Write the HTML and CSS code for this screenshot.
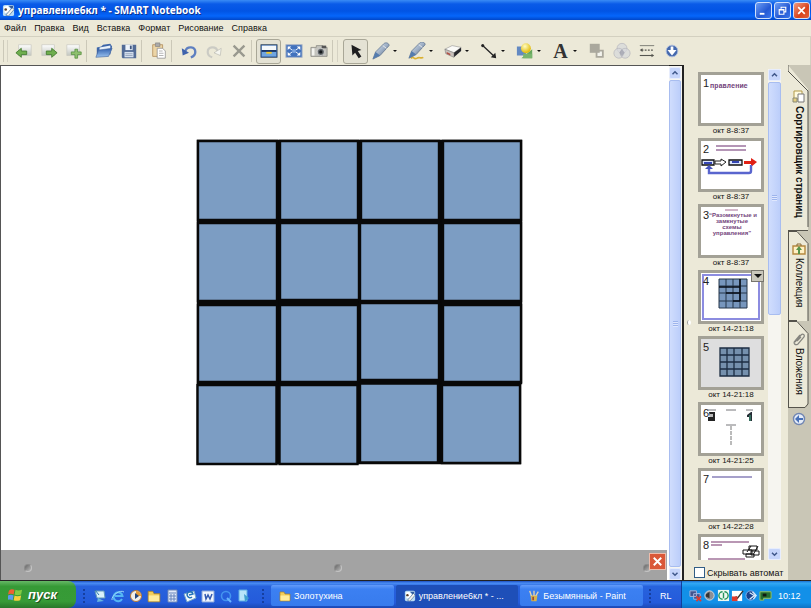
FILE: index.html
```html
<!DOCTYPE html>
<html lang="ru">
<head>
<meta charset="utf-8">
<title>управление6кл * - SMART Notebook</title>
<link rel="stylesheet" href="styles.css">
</head>
<body>
<svg class="defs" aria-hidden="true">
  <defs>
    <linearGradient id="blue" x1="0" y1="0" x2="0" y2="1"><stop offset="0" stop-color="#2f5fae"/><stop offset="1" stop-color="#9cc4f0"/></linearGradient>
    <linearGradient id="pen" x1="0" y1="0" x2="1" y2="1"><stop offset="0" stop-color="#e4edf5"/><stop offset=".5" stop-color="#9fb0c6"/><stop offset="1" stop-color="#3c4c66"/></linearGradient>
    <linearGradient id="sheet" x1="0" y1="0" x2="0" y2="1"><stop offset="0" stop-color="#fff"/><stop offset="1" stop-color="#c2c6bf"/></linearGradient>
    <radialGradient id="ball" cx=".4" cy=".3" r=".7"><stop offset="0" stop-color="#fffcc0"/><stop offset="1" stop-color="#e0b800"/></radialGradient>
    <symbol id="app" viewBox="0 0 14 14"><rect x="1" y="1" width="12" height="12" rx="2" fill="#b9dcf5"/><path d="M2 3l4-1 3 3-2 4-4 1z" fill="#fff"/><path d="M7 2l5 0 0 5z" fill="#315a9c"/><path d="M4 12l7-8 2 2-6 7z" fill="#f4f4ee" stroke="#47678e" stroke-width=".7"/><circle cx="4" cy="6" r="1.4" fill="#59422c"/></symbol>
    <symbol id="folder" viewBox="0 0 12 12"><path d="M1 2h4l1 2h5v7H1z" fill="#f3ce59" stroke="#a8802a" stroke-width=".7"/><path d="M1.500 5.500h9v5h-9z" fill="#ffec9c"/></symbol>
    <symbol id="up" viewBox="0 0 12 12"><path d="M3 7.500l3-3 3 3" fill="none" stroke="#41598c" stroke-width="1.800"/></symbol>
    <symbol id="down" viewBox="0 0 12 12"><path d="M3 4.500l3 3 3-3" fill="none" stroke="#41598c" stroke-width="1.800"/></symbol>
  </defs>
</svg>

<header class="titlebar">
  <svg class="title-icon" viewBox="0 0 14 14"><use href="#app"/></svg>
  <h1>управление6кл * - SMART Notebook</h1>
  <button class="win" aria-label="Свернуть"><svg viewBox="0 0 16 16"><path d="M4 11.500h5" stroke="#fff" stroke-width="2"/></svg></button>
  <button class="win" aria-label="Восстановить"><svg viewBox="0 0 16 16"><path d="M6.500 6V4.500h5v5H10M6 4.500h6M4.500 7h5v5h-5zM4 7.500h6" fill="none" stroke="#fff" stroke-width="1.200"/></svg></button>
  <button class="win close" aria-label="Закрыть"><svg viewBox="0 0 16 16"><path d="M4.500 4.500l7 7M11.500 4.500l-7 7" stroke="#fff" stroke-width="1.800"/></svg></button>
</header>

<nav class="menubar">
  <button>Файл</button><button>Правка</button><button>Вид</button><button>Вставка</button><button>Формат</button><button>Рисование</button><button>Справка</button>
</nav>

<div class="toolbar">
  <i class="sep grip"></i>
  <button aria-label="Назад"><svg viewBox="0 0 20 20"><path d="M4 3h14v12H4z" fill="url(#sheet)" stroke="#c9c9c0" stroke-width=".8"/><path d="M1 12l6-5v3h6v4H7v3z" fill="#6fae4e" stroke="#3b7527" stroke-width=".9"/></svg></button>
  <button aria-label="Вперёд"><svg viewBox="0 0 20 20"><path d="M2 3h14v12H2z" fill="url(#sheet)" stroke="#c9c9c0" stroke-width=".8"/><path d="M19 12l-6-5v3H7v4h6v3z" fill="#6fae4e" stroke="#3b7527" stroke-width=".9"/></svg></button>
  <button aria-label="Добавить страницу"><svg viewBox="0 0 20 20"><path d="M2 3h14v12H2z" fill="url(#sheet)" stroke="#c9c9c0" stroke-width=".8"/><path d="M11 8h3v3h4v3h-4v4h-3v-4H7v-3h4z" fill="#8fc06e" stroke="#4d8a38" stroke-width=".8"/></svg></button>
  <i class="sep"></i>
  <button aria-label="Открыть"><svg viewBox="0 0 20 20"><path d="M2 6l5-1 2-2 8-1 2 3-2 9H2z" fill="#3c65a8"/><path d="M5 6l12-2v7H5z" fill="#e8f1fb"/><path d="M1 17l3-8 15-2-4 9z" fill="url(#blue)" stroke="#49699e" stroke-width=".7"/></svg></button>
  <button aria-label="Сохранить"><svg viewBox="0 0 20 20"><path d="M2 3h16v15H3l-1-1z" fill="#526b96"/><path d="M6 3h8v6H6z" fill="#edf3fa"/><path d="M11 4h2v4h-2z" fill="#3f567e"/><path d="M5 11h10v6H5z" fill="#d5e0ef"/><path d="M6 13h8M6 15h8" stroke="#8696b0" stroke-width=".8"/></svg></button>
  <i class="sep"></i>
  <button aria-label="Вставить"><svg viewBox="0 0 20 20"><path d="M3 3h11v13H3z" fill="#ecd5a6" stroke="#ad8450" stroke-width=".8"/><path d="M6 1h5v4H6z" fill="#aaa" stroke="#777" stroke-width=".6"/><path d="M8 7h6l3 3v8H8z" fill="#fff" stroke="#888" stroke-width=".8"/><path d="M10 10h4M10 12.500h5M10 15h5" stroke="#999" stroke-width=".8"/></svg></button>
  <i class="sep"></i>
  <button aria-label="Отменить"><svg viewBox="0 0 20 20"><path d="M6 10c2-6 11-5 11 1 0 3-2 5-5 6" fill="none" stroke="#5e7fc0" stroke-width="2.600"/><path d="M2 7l1 8 7-3z" fill="#3e62ac"/></svg></button>
  <button aria-label="Повторить"><svg viewBox="0 0 20 20"><path d="M14 10C12 4 3 5 3 11c0 3 2 5 5 6" fill="none" stroke="#cbcbc4" stroke-width="2.400"/><path d="M18 7l-1 8-7-3z" fill="#f5f5ef" stroke="#b5b5ad" stroke-width=".7"/></svg></button>
  <button aria-label="Удалить"><svg viewBox="0 0 20 20"><path d="M4 4l12 12M16 4L4 16" stroke="#99998f" stroke-width="2.600"/></svg></button>
  <i class="sep"></i>
  <button class="on" aria-label="Затенение экрана"><svg viewBox="0 0 20 20"><rect x="1" y="3" width="18" height="14" fill="#3467b0" stroke="#345" stroke-width=".8"/><path d="M2 4h16v5H2z" fill="#f4f8fb"/><path d="M2 9h16v2H2z" fill="#16305f"/><path d="M2 11h16v5H2z" fill="#70a5df"/><path d="M7 11h6v2H7z" fill="#f3c928"/></svg></button>
  <button aria-label="Полный экран"><svg viewBox="0 0 20 20"><rect x="1" y="3" width="18" height="14" fill="#4272bd" stroke="#aab4c5"/><path d="M3 5h4L3 9zM17 5h-4l4 4zM3 15h4l-4-4zM17 15h-4l4-4z" fill="#fff"/><path d="M4 6l4 3M16 6l-4 3M4 14l4-3M16 14l-4-3" stroke="#fff"/><path d="M8 8h4v4H8z" fill="#7fa6de"/></svg></button>
  <button aria-label="Захват экрана"><svg viewBox="0 0 20 20"><path d="M1 6h6V4h7v2h5v10H1z" fill="#c3c3bd" stroke="#85857e" stroke-width=".8"/><path d="M2 7h3v8H2z" fill="#f4f4ef"/><path d="M13 4h5v3h-5z" fill="#555"/><circle cx="12" cy="11" r="4" fill="#5d6265" stroke="#eee" stroke-width=".7"/><circle cx="12" cy="11" r="1.800" fill="#15191c"/></svg></button>
  <i class="sep wide"></i>
  <button class="on" aria-label="Выбрать"><svg viewBox="0 0 20 20"><path d="M5 3l1 12 3-3 4 6 3-2-4-6 4-1z" fill="#1e1e20"/></svg></button>
  <button aria-label="Перо"><svg viewBox="0 0 20 20"><path d="M1 19l3-8L13 2c2-2 6-1 6 2L9 15z" fill="url(#pen)" stroke="#5b6f8c" stroke-width=".8"/><path d="M1 19l3-8 5 4z" fill="#547cae"/><path d="M12 4l4 3" stroke="#eee"/></svg></button>
  <button class="drop" aria-label="Виды пера"></button>
  <button aria-label="Художественное перо"><svg viewBox="0 0 20 20"><path d="M3 18c5-3 2 2 7 0 3-2 4 1 7-1" stroke="#dbb132" stroke-width="1.800" fill="none"/><path d="M1 18l3-8L13 1c2-2 6-1 6 2L9 14z" fill="url(#pen)" stroke="#5b6f8c" stroke-width=".8"/><path d="M1 18l3-8 5 4z" fill="#547cae"/><path d="M12 3l4 3" stroke="#eee"/></svg></button>
  <button class="drop" aria-label="Виды художественного пера"></button>
  <button aria-label="Ластик"><svg viewBox="0 0 20 20"><path d="M1 8l8-4 10 2-8 6z" fill="#fafaf7" stroke="#888" stroke-width=".6"/><path d="M11 12l8-6v4l-8 7z" fill="#25262b"/><path d="M1 8l10 4v5L2 13z" fill="#c9c2bc" stroke="#777" stroke-width=".6"/><path d="M3 11l4 2v2l-4-2z" fill="#b24f43"/></svg></button>
  <button class="drop" aria-label="Виды ластика"></button>
  <button aria-label="Линия"><svg viewBox="0 0 20 20"><path d="M3 4l13 12" stroke="#222" stroke-width="1.500"/><circle cx="3" cy="4" r="1.700" fill="#222"/><path d="M18 18l-6-1 5-5z" fill="#222"/></svg></button>
  <button class="drop" aria-label="Виды линий"></button>
  <button aria-label="Фигура"><svg viewBox="0 0 20 20"><path d="M1 5h10v10H1z" fill="#6389c2"/><path d="M6 18L18 8v10z" fill="#66a75c"/><path d="M8 13h10v5H8z" fill="#78b56e"/><circle cx="11" cy="7" r="5.500" fill="url(#ball)"/></svg></button>
  <button class="drop" aria-label="Виды фигур"></button>
  <button class="letter" aria-label="Текст">A</button>
  <button class="drop" aria-label="Виды текста"></button>
  <button aria-label="Порядок"><svg viewBox="0 0 20 20"><path d="M9.500 9.500h7v7h-7z" fill="#f3f3ed" stroke="#aaa89d" stroke-width="2"/><path d="M2 2h11v10H2z" fill="#aaa89d"/></svg></button>
  <button aria-label="Прозрачность"><svg viewBox="0 0 20 20" fill="#d6d7dc" fill-opacity=".7" stroke="#b6b7bc" stroke-width=".8"><circle cx="10" cy="7" r="5.500"/><circle cx="6.500" cy="12.500" r="5.500"/><circle cx="13.500" cy="12.500" r="5.500"/><path d="M10 8l3 4-3 4-3-4z" fill="#9b9da9" stroke="none"/></svg></button>
  <button aria-label="Свойства линии"><svg viewBox="0 0 20 20" stroke="#55554f" stroke-width="1.200"><path d="M2 4h16" stroke="#88887f"/><path d="M4 9h14" stroke-dasharray="2 1.500"/><path d="M2 15h14"/><path d="M5 7L2 9l3 2zM15 13l3 2-3 2z" fill="#55554f" stroke="none"/></svg></button>
  <button aria-label="Переместить панель"><svg viewBox="0 0 20 20"><circle cx="10" cy="10" r="6.500" fill="#4569ad" stroke="#aebddd"/><path d="M8.500 5h3v4H15l-5 6-5-6h3.500z" fill="#fff"/></svg></button>
</div>

<main class="workspace">
  <section class="editor">
    <div class="page">
      <svg class="drawing" viewBox="196 139 327 327" fill="#7c9dc3" stroke="#080808" stroke-width="2.400">
        <path d="M198 141h323v242h-1v80H198z" fill="#080808"/>
        <path d="M198 141h79v79h-79zM280 141h78v79h-78zM361 141h78v79h-78zM443 141h78v79h-78z"/>
        <path d="M198 223h79v78h-79zM280 223h79v77h-79zM360 223h79v78h-79zM443 223h78v78h-78z"/>
        <path d="M198 305h79v77h-79zM280 305h78v77h-78zM360 303h79v77h-79zM443 305h78v77h-78z"/>
        <path d="M197.500 385h79v79h-79zM279.500 385h78v79h-78zM360 383.500h78v79h-78zM442 385h78v78h-78z"/>
      </svg>
    </div>
    <div class="shade"><i class="dot"></i><i class="dot"></i><i class="dot"></i>
      <button class="shade-close" aria-label="Закрыть затенение"><svg viewBox="0 0 16 16"><path d="M4 4l8 8M12 4l-8 8" stroke="#fff" stroke-width="2"/></svg></button></div>
  </section>
  <div class="scroll main-scroll">
    <button aria-label="Вверх"><svg viewBox="0 0 12 12"><use href="#up"/></svg></button>
    <div class="track"><div class="thumb"></div></div>
    <button aria-label="Вниз"><svg viewBox="0 0 12 12"><use href="#down"/></svg></button>
  </div>
  <div class="gutter"><i></i></div>
  <aside class="sorter">
    <div class="sorter-body">
      <ol class="slides">
        <li><svg viewBox="0 0 60 48"><text class="num" x="2" y="12">1</text><text class="slide-title spaced" x="9" y="13">правление</text></svg><span>окт 8-8:37</span></li>
        <li><svg viewBox="0 0 60 48"><text class="num" x="2" y="12">2</text><path d="M15 5h30M15 9h30" stroke="#9c739e" stroke-width="1.500"/><path d="M1 19h12v5H1zM28 19h13v5H28z" fill="#dbe5ff" stroke="#111" stroke-width="1.300"/><path d="M3 22h8M31 21h7" stroke="#3546b5" stroke-width="2"/><path d="M14 20h6v-2l5 3-5 4v-2h-6z" fill="#fff" stroke="#222"/><path d="M43 20h7v-3l6 4-6 5v-3h-7z" fill="#e02116"/><path d="M50 24v6q0 2-2 2H8v-5" fill="none" stroke="#5965ce" stroke-width="2.400"/><path d="M4 28l4-4 4 4z" fill="#4654c0"/></svg><span>окт 8-8:37</span></li>
        <li><svg viewBox="0 0 60 48"><text class="num" x="2" y="12">3</text><path d="M24 3h13" stroke="#a66e95"/><g class="slide-title" text-anchor="middle"><text x="32" y="10">“Разомкнутые и</text><text x="31" y="16">замкнутые</text><text x="31" y="22">схемы</text><text x="31" y="28">управления”</text></g></svg><span>окт 8-8:37</span></li>
        <li class="current"><svg viewBox="0 0 60 48"><text class="num" x="2" y="12">4</text><path d="M18 6h28v29H18z" fill="#7796bd"/><path d="M18 6h28v29H18zM25 6v29M32 6v29M39 6v29M18 13h28M18 20h28M18 28h28" fill="none" stroke="#26374b"/><path d="M18 14h21M25 20h14M32 28h7M39 6v22" fill="none" stroke="#080e18" stroke-width="1.600"/></svg><button class="slide-menu" aria-label="Меню страницы"></button><span>окт 14-21:18</span></li>
        <li class="dim"><svg viewBox="0 0 60 48"><text class="num" x="2" y="12">5</text><path d="M19 9h29v28H19z" fill="#7590ad"/><path d="M19 9h29v28H19zM26 9v28M33 9v28M41 9v28M19 16h29M19 23h29M19 30h29" fill="none" stroke="#1c2d43" stroke-width="1.300"/></svg><span>окт 14-21:18</span></li>
        <li><svg viewBox="0 0 60 48"><text class="num" x="2" y="12">6</text><path d="M6 5h9M25 5h10M45 5h7M25 20h10" stroke="#77777a"/><path d="M8 7h6v9H7v-4h2z" fill="#222"/><path d="M9 9h3v3H9z" fill="#bbb"/><path d="M30 21v20" stroke="#777" stroke-dasharray="4 1"/><path d="M46 10l4-3h1v9h-3v-4h-2z" fill="#252c35"/><path d="M49 10v6" stroke="#47af86"/></svg><span>окт 14-21:25</span></li>
        <li><svg viewBox="0 0 60 48"><text class="num" x="2" y="12">7</text><path d="M11 6h40" stroke="#8981b8" stroke-width="1.500"/></svg><span>окт 14-22:28</span></li>
        <li><svg viewBox="0 0 60 48"><text class="num" x="2" y="12">8</text><path d="M10 5h38M10 8h11M7 22h37" stroke="#a2759c" stroke-width="1.500"/><path d="M48 9h8v4h-8zM42 13h9v4h-9zM50 14h8v4h-8zM45 17h8v3h-8zM50 9l-4 6M57 9l-5 9" fill="#fff" stroke="#151515"/></svg></li>
      </ol>
      <div class="scroll side-scroll">
        <button aria-label="Страницы вверх"><svg viewBox="0 0 12 12"><use href="#up"/></svg></button>
        <div class="track"><div class="thumb"></div></div>
        <button aria-label="Страницы вниз"><svg viewBox="0 0 12 12"><use href="#down"/></svg></button>
      </div>
    </div>
    <label class="hide"><input type="checkbox"><span>Скрывать автомат</span></label>
  </aside>
  <nav class="tabs">
    <button class="tab active"><svg class="tab-shape" viewBox="0 0 24 166" preserveAspectRatio="none"><path d="M0 0l20 24v142H0z" fill="#ece9d8"/><path d="M0 0v6l20 20v136M0 165.500h20" fill="none" stroke="#55534c"/></svg><svg class="tab-icon" viewBox="0 0 14 14"><path d="M2 1h8v8H2z" fill="#fffbe0" stroke="#b39a48"/><path d="M6 4h6v8H6z" fill="#fff" stroke="#777"/><path d="M1 8h4v4H1z" fill="#e4cf80" stroke="#887"/></svg><span>Сортировщик страниц</span></button>
    <button class="tab"><svg class="tab-shape" viewBox="0 0 24 90" preserveAspectRatio="none"><path d="M0 0h9l11 12v78H0z" fill="#ece9d8"/><path d="M.5 0v90M0 .5h9l11 12V90M0 89.500h9" fill="none" stroke="#55534c"/></svg><svg class="tab-icon" viewBox="0 0 14 14"><path d="M1 4h12v8H1z" fill="#fff0c4" stroke="#b5883f" stroke-width="1.400"/><path d="M5 4V2h4v2" fill="none" stroke="#8a6a34"/><path d="M7 4l3 4H8v4H6V8H4z" fill="#56944b"/></svg><span>Коллекция</span></button>
    <button class="tab"><svg class="tab-shape" viewBox="0 0 24 87" preserveAspectRatio="none"><path d="M0 0h9l11 12v70l-4 5H0z" fill="#ece9d8"/><path d="M.5 0v87M0 .5h9l11 12V83l-3 3.500H0" fill="none" stroke="#55534c"/></svg><svg class="tab-icon" viewBox="0 0 14 14"><path d="M3 10l6-7c2-2 4 0 3 2l-6 7c-3 2-5-1-3-3l5-6M5 9l4-4" fill="none" stroke="#85857f" stroke-width="1.200"/></svg><span>Вложения</span></button>
    <button class="tab-move" aria-label="Переместить вкладки"><svg viewBox="0 0 14 14"><circle cx="7" cy="7" r="5.500" fill="#e5ecf8" stroke="#7186b2" stroke-width="1.400"/><path d="M3 7l4-4v3h4v2H7v3z" fill="#4770b8"/></svg></button>
  </nav>
</main>

<footer class="taskbar">
  <button class="start"><svg viewBox="0 0 16 16"><path d="M1 4c2-2 4-2 6-1L6 8C4 7 2 7 0 8z" fill="#ef6034"/><path d="M8 3c2 1 4 1 7 0l-1 5c-3 1-5 1-7 0z" fill="#83cc45"/><path d="M0 9c2-1 4-1 6 0l-1 5c-2-1-4-1-6 0z" fill="#5b9bf0"/><path d="M7 9c2 1 4 1 7 0l-1 5c-3 1-5 1-7 0z" fill="#f8cf3d"/></svg>пуск</button>
  <div class="quick">
    <i class="dots"></i>
    <button aria-label="Рабочий стол"><svg viewBox="0 0 14 14"><path d="M2 2h9l1 7H4z" fill="#d9f1fa" stroke="#6299ba"/><path d="M5 9l6 3-7 1z" fill="#67b6dd"/><path d="M2 1l4 5" stroke="#2b7bac"/></svg></button>
    <button aria-label="Internet Explorer"><svg viewBox="0 0 14 14"><path d="M11 10a4.500 4.500 0 1 1 .5-3H4" fill="none" stroke="#55b7f4" stroke-width="2"/><path d="M1 11c-1-4 8-11 12-8" fill="none" stroke="#9bd7f8"/></svg></button>
    <button aria-label="Проигрыватель"><svg viewBox="0 0 14 14"><circle cx="7" cy="7" r="5.500" fill="#f2eee8" stroke="#b57836"/><path d="M7 2a5 5 0 0 1 5 5H7z" fill="#e39a38"/><path d="M6 4l4 3-4 3z" fill="#24467e"/></svg></button>
    <button aria-label="Проводник"><svg viewBox="0 0 12 12"><use href="#folder"/></svg></button>
    <button aria-label="Калькулятор"><svg viewBox="0 0 14 14"><path d="M3 1h9v12H3z" fill="#e2eafa" stroke="#6d86b3"/><path d="M4 4h7M4 7h7M4 10h7M6 5v7M9 5v7" stroke="#6784bb"/></svg></button>
    <button aria-label="Почта"><svg viewBox="0 0 14 14"><path d="M1 5l10-3 2 7-9 4z" fill="#f4fafc" stroke="#74a6c9"/><path d="M9 8a3 3 0 1 1 1-3L6 6" fill="none" stroke="#2373b8" stroke-width="1.500"/></svg></button>
    <button aria-label="Word"><svg viewBox="0 0 14 14"><path d="M1 2h12v11H1z" fill="#f2f6fd" stroke="#8aa6d8"/><path d="M4 5l1 5 2-4 2 4 2-5" fill="none" stroke="#345ab0" stroke-width="1.500"/></svg></button>
    <button aria-label="Поиск"><svg viewBox="0 0 14 14"><circle cx="7" cy="7" r="4.500" fill="none" stroke="#4494ef" stroke-width="1.600"/><path d="M8 9l4 4" stroke="#69b5ff" stroke-width="2"/></svg></button>
    <button aria-label="Заметки"><svg viewBox="0 0 14 14"><path d="M2 1h8v11H2z" fill="#b8e5fa" stroke="#5faee3"/><path d="M7 5l5 4-4 4z" fill="#3f9fd0"/></svg></button>
    <i class="dots last"></i>
  </div>
  <div class="tasks">
    <button><svg viewBox="0 0 12 12"><use href="#folder"/></svg>Золотухина</button>
    <button class="pressed"><svg viewBox="0 0 14 14"><use href="#app"/></svg>управление6кл * - ...</button>
    <button><svg viewBox="0 0 14 14"><path d="M3 6h8l-1 7H4z" fill="#d7b44b"/><path d="M4 7L2 1M7 7V1M9 7l3-5" stroke="#e2d2ae" stroke-width="1.600"/><path d="M5 8h2v4H5z" fill="#9a493a"/></svg>Безымянный - Paint</button>
  </div>
  <div class="lang"><i class="dots"></i>RL</div>
  <div class="tray">
    <svg viewBox="0 0 14 14"><path d="M1 2h7v6H1zM5 5h7v6H5z" fill="#42548f" stroke="#a9b8e0"/><path d="M8 8l5 5M13 8l-5 5" stroke="#e1392c" stroke-width="1.800"/></svg>
    <svg viewBox="0 0 14 14"><circle cx="7" cy="7" r="5" fill="#8a8f96" stroke="#d9dde2"/><path d="M3 6l4-3v7L3 8z" fill="#333"/></svg>
    <svg viewBox="0 0 14 14"><path d="M1 1h12v12H1z" fill="#eef8f1"/><path d="M6 3a4 4 0 0 0 0 8M8 3a4 4 0 0 1 0 8M7 4v6" fill="none" stroke="#24945c" stroke-width="1.500"/></svg>
    <svg viewBox="0 0 14 14"><path d="M1 2h11v11H1z" fill="#fff"/><path d="M5 8l2 2 6-8" fill="none" stroke="#333" stroke-width="1.500"/><path d="M1 8h6v5H1z" fill="#df3a2e"/></svg>
    <svg viewBox="0 0 14 14"><circle cx="6" cy="7" r="5" fill="#19408a" stroke="#8cb8ef"/><path d="M5 4l5 3-5 4M8 3l4 4-3 4" fill="none" stroke="#d5eafc" stroke-width="1.400"/></svg>
    <svg viewBox="0 0 14 14"><path d="M1 3h12v7H5v2H1z" fill="#236c32" stroke="#9cc65e"/><path d="M4 5h4v3H4z" fill="#101910"/></svg>
    <time>10:12</time>
  </div>
</footer>
</body>
</html>
```
FILE: styles.css
```css
* { box-sizing: border-box; }
body {
  margin: 0;
  height: 100vh;
  display: flex;
  flex-direction: column;
  overflow: hidden;
  background: #ece9d8;
  color: #111;
  font: 9px/12px "Liberation Sans", sans-serif;
}
button { margin: 0; padding: 0; border: 0; background: none; color: inherit; font: inherit; }
svg { display: block; flex: none; }
.defs { position: absolute; width: 0; height: 0; }

.titlebar {
  flex: none;
  height: 20px;
  display: flex;
  align-items: center;
  gap: 2px;
  padding: 0 1px 0 2px;
  background: linear-gradient(#3a8cf5, #0a5be8 20%, #0254e4 55%, #0566fb 80%, #0146c8);
}
.title-icon { width: 13px; height: 13px; }
.titlebar h1 {
  flex: 1;
  margin: 0 0 0 1px;
  color: #fff;
  font: bold 10px/16px "Noto Sans", sans-serif;
  white-space: nowrap;
  text-shadow: 1px 1px #0a318f;
}
.win {
  width: 17px;
  height: 17px;
  border: 1px solid #cfe0fb;
  border-radius: 3px;
  background: linear-gradient(135deg, #6c9df3, #2459d4 60%, #3b76ea);
}
.win svg { width: 15px; height: 15px; }
.win.close { background: linear-gradient(135deg, #f09a80, #d8431c 60%, #e2603a); }

.menubar {
  flex: none;
  height: 16px;
  display: flex;
  align-items: center;
  gap: 8px;
  padding: 0 4px;
}

.toolbar {
  flex: none;
  height: 29px;
  display: flex;
  align-items: center;
  border: 1px solid #d3d0c0;
  border-width: 1px 1px 0 0;
}
.toolbar button { flex: none; width: 25px; height: 25px; display: grid; place-items: center; }
.toolbar svg { width: 18px; height: 18px; }
.toolbar .on { border: 1px solid #a9a797; border-radius: 3px; background: #e4e2d4; }
.toolbar .drop { width: 11px; justify-items: start; }
.drop::before { content: ""; border: 2px solid transparent; border-top-color: #111; border-bottom: 0; }
.toolbar .letter { font: bold 20px/22px "Liberation Serif", serif; color: #333; }
.sep { flex: none; width: 5px; height: 22px; border-left: 1px solid #cbc8b8; }
.sep.grip { width: 8px; margin-left: 3px; box-shadow: inset 3px 0 #ece9d8, inset 4px 0 #d5d2c3; }
.sep.wide { width: 11px; margin-left: 1px; box-shadow: inset 4px 0 #ece9d8, inset 5px 0 #d5d2c3; }

.workspace {
  flex: 1;
  min-height: 0;
  display: flex;
  border-bottom: 1px solid #222;
}
.editor {
  flex: 1;
  min-width: 0;
  display: flex;
  flex-direction: column;
  border: solid #555;
  border-width: 1px 0 0 1px;
  background: #fff;
}
.page { flex: 1; min-height: 0; padding: 73px 0 0 195px; }
.drawing { width: 327px; height: 327px; }
.shade {
  flex: none;
  height: 30px;
  display: flex;
  align-items: center;
  justify-content: space-between;
  padding: 6px 4px 0 23px;
  margin-right: 2px;
  background: #a3a3a3;
  position: relative;
}
.dot {
  width: 8px;
  height: 8px;
  border: 1px solid #8b8b8b;
  border-right-color: #c4c4c4;
  border-bottom-color: #c4c4c4;
  border-radius: 50%;
  background: linear-gradient(135deg, #666, #bbb);
}
.dot:nth-child(3) { margin-right: 12px; }
.shade-close {
  position: absolute;
  right: 1px;
  top: 3px;
  width: 17px;
  height: 17px;
  border: 1px solid #eebcab;
  background: #da5838;
}
.shade-close svg { width: 15px; height: 15px; }

.scroll { flex: none; display: flex; flex-direction: column; background: #f6f5f0; }
.scroll button { height: 12px; background: #c6d5fb; border: 1px solid #e7edfd; border-radius: 2px; }
.scroll svg { width: 100%; height: 10px; }
.track { flex: 1; padding: 1px 0; }
.thumb {
  border: 1px solid #a8bdf0;
  border-radius: 2px;
  background:
    repeating-linear-gradient(#9db4ec 0 1px, #dfe7fe 1px 2px) center / 5px 6px no-repeat,
    linear-gradient(90deg, #d0ddfd, #bccefa);
}
.main-scroll { width: 15px; padding: 1px 1px 0 0; border: solid #222; border-width: 1px 2px 0 0; }
.main-scroll .thumb { height: 100%; }
.side-scroll { width: 13px; margin-top: 1px; }
.side-scroll .thumb { height: 50%; }

.gutter { flex: none; width: 10px; display: grid; place-items: center; }
.gutter i { width: 4px; height: 5px; border-left: 1px solid #999; border-radius: 50%; background: #fff; }

.sorter { flex: none; width: 94px; display: flex; flex-direction: column; }
.sorter-body { flex: 1; min-height: 0; display: flex; gap: 4px; padding: 3px 0 0 4px; }
.slides {
  flex: none;
  width: 66px;
  margin: 0;
  padding: 4px 0 0;
  overflow: hidden;
  list-style: none;
}
.slides li { height: 66px; position: relative; text-align: center; }
.slides svg { width: 66px; height: 54px; border: 3px solid #a3a196; background: #fff; }
.slides span { display: block; font-size: 8px; line-height: 10px; white-space: nowrap; }
.slides .current svg { box-shadow: inset 0 0 0 1px #fff, inset 0 0 0 3px #8c8ce0; }
.slides .dim svg { background: #dededf; }
.num { font: 11px "Liberation Sans", sans-serif; fill: #222; }
.slide-title { font: bold 6px "Liberation Sans", sans-serif; fill: #74457c; }
.spaced { font: bold 7px "Liberation Mono", monospace; }
.slide-menu {
  position: absolute;
  right: 0;
  top: 0;
  width: 13px;
  height: 12px;
  display: grid;
  place-items: center;
  border: 1px solid #77756d;
  background: #c9c7bb;
}
.slide-menu::before { content: ""; border: 4px solid transparent; border-top-color: #111; border-bottom: 0; }
.hide { flex: none; height: 20px; padding-top: 5px; display: flex; align-items: center; gap: 2px; overflow: hidden; }
.hide input {
  appearance: none;
  flex: none;
  width: 11px;
  height: 11px;
  margin: 0;
  border: 1px solid #315d86;
  background: #fff;
}
.hide span { white-space: nowrap; }

.tabs {
  flex: none;
  width: 23px;
  display: flex;
  flex-direction: column;
  background: #c9c6b6;
}
.tab { flex: none; height: 90px; display: flex; flex-direction: column; align-items: center; gap: 2px; padding: 11px 2px 0 0; position: relative; }
.tab.active { height: 166px; padding-top: 25px; font-weight: bold; }
.tab:nth-child(3) { height: 87px; }
.tab-shape { position: absolute; left: 0; top: 0; width: 24px; height: 100%; }
.tab-icon { position: relative; width: 14px; height: 14px; }
.tab span { position: relative; writing-mode: vertical-rl; font-size: 10px; line-height: 12px; white-space: nowrap; }
.tab-move { display: grid; justify-items: center; padding: 4px 2px 0 0; }
.tab-move svg { width: 14px; height: 14px; }

.taskbar {
  flex: none;
  height: 27px;
  display: flex;
  color: #fff;
  background: linear-gradient(#1c4fc0, #4a8df3 8%, #2762dd 20%, #245bdb 80%, #1b48b4);
}
.start {
  flex: none;
  width: 76px;
  display: flex;
  align-items: center;
  gap: 5px;
  padding-left: 8px;
  border-radius: 0 8px 8px 0;
  background: linear-gradient(#66b866, #369a36 20%, #379b37 75%, #28772a);
  font: italic bold 13px/16px "Liberation Sans", sans-serif;
  text-shadow: 1px 1px #1d4f1f;
}
.start svg { width: 15px; height: 15px; }
.quick { flex: none; width: 195px; display: flex; align-items: center; padding: 2px 0 0 6px; gap: 4px; }
.quick svg { width: 14px; height: 14px; }
.dots { flex: none; width: 4px; height: 16px; background: radial-gradient(circle, #163f9f 40%, transparent 50%) 0 0 / 4px 4px; }
.quick .dots { margin-right: 3px; }
.quick .last { margin: 0 0 0 6px; }
.tasks { flex: 1; min-width: 0; display: flex; gap: 2px; padding: 4px 0 2px; }
.tasks button {
  flex: 1;
  min-width: 0;
  display: flex;
  align-items: center;
  gap: 3px;
  padding-left: 8px;
  border-radius: 2px;
  background: linear-gradient(#639bfa, #3c80f2 20%, #377bed);
  white-space: nowrap;
  overflow: hidden;
}
.tasks .pressed { background: #1e4fb8; }
.tasks svg { width: 12px; height: 12px; }
.lang { flex: none; width: 38px; display: flex; align-items: center; gap: 8px; padding: 2px 0 0 5px; }
.tray {
  flex: none;
  width: 130px;
  display: flex;
  align-items: center;
  gap: 1px;
  padding: 2px 0 0 7px;
  border-left: 1px solid #123f9b;
  background: linear-gradient(#1a6fd0, #32a8f5 8%, #1290e8 25%, #1290e8 80%, #0f72c4);
}
.tray svg { width: 13px; height: 13px; }
.tray time { margin-left: 5px; }
```
